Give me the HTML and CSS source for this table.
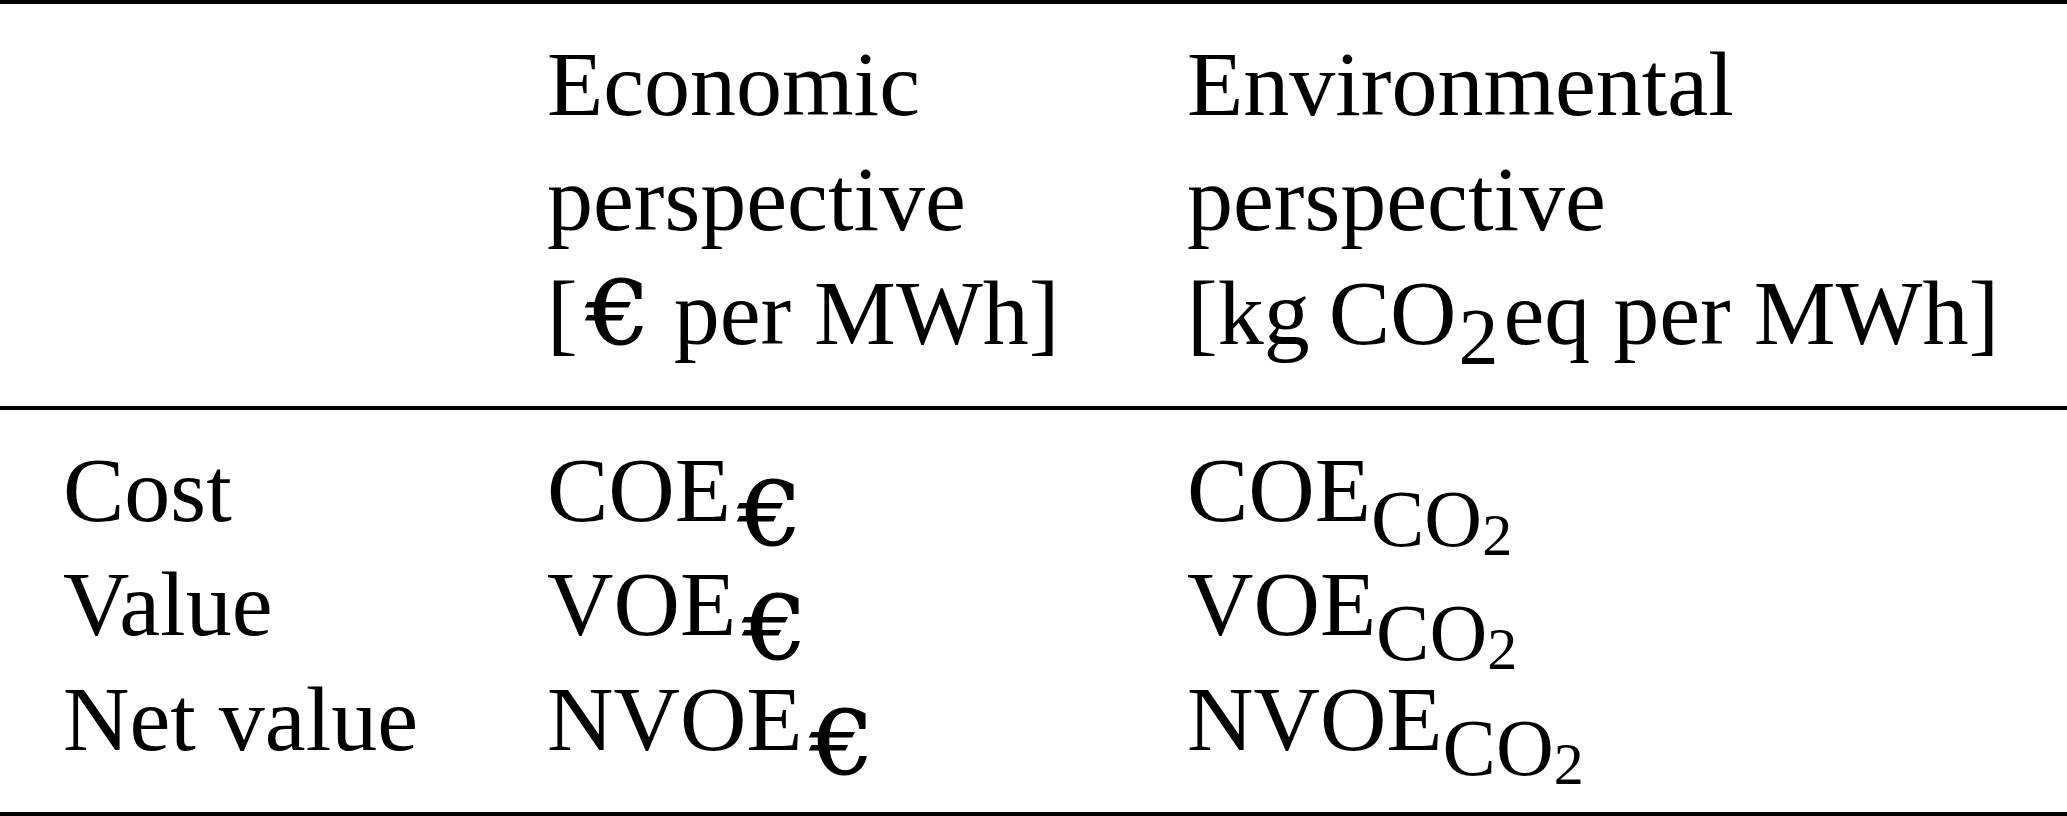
FILE: index.html
```html
<!DOCTYPE html>
<html lang="en">
<head>
    <meta charset="UTF-8">
    <meta name="viewport" content="width=device-width, initial-scale=1.0">
    <title>Cost and value of electricity</title>
    <link rel="stylesheet" href="styles.css">
</head>
<body>
    <table class="metrics">
        <colgroup>
            <col class="col-label">
            <col class="col-econ">
            <col class="col-env">
        </colgroup>
        <thead>
            <tr>
                <th></th>
                <th>Economic<br>perspective<br>[<span class="euro">€</span> per MWh]</th>
                <th>Environmental<br>perspective<br>[<span class="thin">kg CO</span><span class="head-sub">2</span>eq per MWh]</th>
            </tr>
        </thead>
        <tbody>
            <tr>
                <td>Cost</td>
                <td>COE<span class="sub-euro">€</span></td>
                <td>COE<span class="sub">CO<span class="sub2">2</span></span></td>
            </tr>
            <tr>
                <td>Value</td>
                <td>VOE<span class="sub-euro">€</span></td>
                <td>VOE<span class="sub">CO<span class="sub2">2</span></span></td>
            </tr>
            <tr>
                <td>Net value</td>
                <td>NVOE<span class="sub-euro">€</span></td>
                <td>NVOE<span class="sub">CO<span class="sub2">2</span></span></td>
            </tr>
        </tbody>
    </table>
</body>
</html>
```

FILE: styles.css
```css
body {
    margin: 0;
    padding: 0;
    background-color: #fff;
    color: #000;
    font-family: "Liberation Serif", "Times New Roman", serif;
}
.metrics {
    width: 2067px;
    table-layout: fixed;
    border-collapse: separate;
    border-spacing: 0;
    border-top: 4px solid #000;
    border-bottom: 4px solid #000;
    font-size: 92px;
    line-height: 114.5px;
}
.col-label {
    width: 484px;
}
.col-econ {
    width: 640px;
}
.col-env {
    width: 943px;
}
th, td {
    padding: 0 63px;
    text-align: left;
    font-weight: normal;
    vertical-align: top;
    white-space: nowrap;
}
thead th {
    padding-top: 23px;
    padding-bottom: 35px;
    border-bottom: 4px solid #000;
}
tbody tr:first-child td {
    padding-top: 23px;
}
tbody tr:last-child td {
    padding-bottom: 36px;
}
/* euro sign is wider and heavier than the Times one */
.euro,
.sub-euro {
    display: inline-block;
    font-family: "DejaVu Serif", serif;
    font-size: 88px;
    line-height: 0;
    -webkit-text-stroke: 1px #000;
    transform: scaleX(1.15);
    transform-origin: left center;
}
.euro {
    margin: 0 9px 0 8px;
}
.sub-euro {
    margin: 0 9px 0 7px;
    vertical-align: -24px;
}
.thin {
    word-spacing: -4px;
}
.head-sub {
    font-size: 80px;
    line-height: 0;
    vertical-align: -20px;
    margin: 0 5px 0 2px;
}
.sub {
    font-size: 80px;
    line-height: 0;
    vertical-align: -25px;
}
.sub2 {
    font-size: 60px;
    vertical-align: -9px;
}
```
